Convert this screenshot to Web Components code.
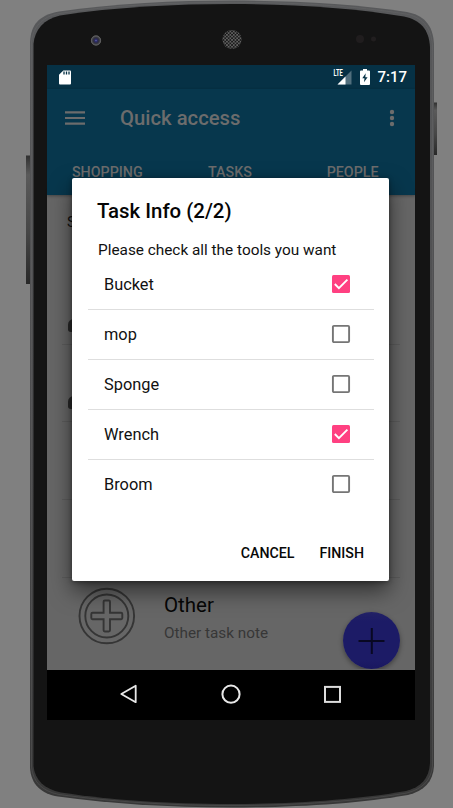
<!DOCTYPE html>
<html lang="en"><head><meta charset="utf-8"><title>Task Info</title>
<style>html,body{margin:0;width:453px;height:808px;overflow:hidden;background:#808080;font-family:Roboto,sans-serif}</style></head>
<body>
<phone-device>
 <status-bar time="7:17"></status-bar>
 <app-header heading="Quick access"><span>SHOPPING</span><span>TASKS</span><span>PEOPLE</span></app-header>
 <task-list><task-entry heading="Other" note="Other task note"></task-entry></task-list>
 <nav-bar></nav-bar>
 <add-button slot="overlay"></add-button>
 <tool-dialog slot="overlay" heading="Task Info (2/2)" message="Please check all the tools you want">
  <tool-row checked>Bucket</tool-row><tool-row>mop</tool-row><tool-row>Sponge</tool-row><tool-row checked>Wrench</tool-row><tool-row>Broom</tool-row>
  <span slot="action">CANCEL</span><span slot="action">FINISH</span>
 </tool-dialog>
</phone-device>
<script>
const define=(name,render)=>customElements.define(name,class extends HTMLElement{
  constructor(){super();this.attachShadow({mode:'open'});}
  connectedCallback(){this.shadowRoot.innerHTML=render(this);}
});

define('phone-device',()=>`<style>
:host{display:block;position:relative;isolation:isolate;width:453px;height:808px;box-sizing:border-box;padding:65px 38px 88px 47px;overflow:hidden}
.shell{position:absolute;inset:0;z-index:-1}
.screen{display:flex;flex-direction:column;width:368px;height:655px;overflow:hidden;background:#666}
</style>
<svg class="shell" width="453" height="808">
 <defs>
  <linearGradient id="rim" x1="0" y1="0" x2="0" y2="1"><stop offset="0" stop-color="#58595b"/><stop offset=".5" stop-color="#4c4c4e"/><stop offset="1" stop-color="#373737"/></linearGradient>
  <linearGradient id="key" x1="0" y1="0" x2="0" y2="1"><stop offset="0" stop-color="#303030"/><stop offset=".15" stop-color="#5a5a5a"/><stop offset=".6" stop-color="#464646"/><stop offset="1" stop-color="#282828"/></linearGradient>
  <pattern id="mesh" width="3.4" height="3.4" patternUnits="userSpaceOnUse"><circle cx=".85" cy=".85" r=".95" fill="#101010"/><circle cx="2.55" cy="2.55" r=".95" fill="#101010"/></pattern>
  <radialGradient id="lens"><stop offset="0" stop-color="#6b6bb0"/><stop offset=".25" stop-color="#292966"/><stop offset=".55" stop-color="#30303c"/><stop offset="1" stop-color="#555"/></radialGradient>
 </defs>
 <rect x="26" y="155.500" width="5" height="128.500" fill="url(#key)"/>
 <rect x="432.500" y="102.500" width="4.500" height="52.500" fill="url(#key)"/>
 <path d="M30 42C31 25 38 15.500 59 11.500C113 3.500 176 .5 232 .5C296 .5 357 4 407 12C423 15 433 24 434 44V766C433 782 424 791 408 795C360 803.500 296 807.500 232 807.500C166 807.500 110 803.500 58 796.500C41 794 31 784 30 768Z" fill="url(#rim)"/>
 <path d="M31.500 43C32.500 28 41 17 59 13.500C112 5 176 2.300 232 2.300C296 2.300 356 6 406 14C421 17 431 26 432.500 45V766C431 781 422 789 407 793C360 801 296 805.500 232 805.500C166 805.500 111 801.500 59 794.500C42 791 33 782 31.500 767Z" fill="none" stroke="#727274" stroke-opacity=".4" stroke-width=".7"/>
 <path d="M33.500 44C34.500 30 44 19 60 15.500C115 7 176 4 232 4C294 4 354 8 404 16.500C420 20 429 29 430 47V763C429 779 421 787 406 791C358 799.500 294 804 232 804C166 804 111 800 61 792.500C44 789 35 780 33.500 766Z" fill="#141414"/>
 <circle cx="96" cy="40.500" r="5" fill="url(#lens)"/><circle cx="96" cy="40.500" r="4.600" fill="none" stroke="#666" stroke-width=".8"/>
 <circle cx="232" cy="39.500" r="9.500" fill="#626262"/><circle cx="232" cy="39.500" r="9.500" fill="url(#mesh)"/>
 <circle cx="360" cy="39" r="4" fill="#201d1e"/><circle cx="373.500" cy="39" r="2.500" fill="#211e1f"/>
</svg>
<div class="screen"><slot></slot></div><slot name="overlay"></slot>`);

define('status-bar',e=>`<style>
:host{display:flex;height:24px;flex:none;box-sizing:border-box;padding:0 8px 0 12px;align-items:center;background:#063145;color:#fff;font:500 15px Roboto,sans-serif}
svg{display:block}.sp{flex:1}.bat{margin:0 7px 0 8px}
</style>
<svg width="12" height="15" viewBox="0 0 12 15"><path d="M4.300.5H11q1 0 1 1v12q0 1-1 1H1q-1 0-1-1V4.800Z" fill="#fff"/><path d="M5 1.500v3M7.500 1.500v3M10 1.500v3" stroke="#063145" stroke-width="1.300"/></svg>
<span class="sp"></span>
<svg width="19" height="19" viewBox="0 -2 19 19"><path d="M18.500.5v14H4.500Z" fill="#516f7d"/><path d="M12.500 6.500v8h-8Z" fill="#fff"/><path d="M0 0h10v7H0Z" fill="#063145"/><text x=".5" y="6.300" textLength="9.300" lengthAdjust="spacingAndGlyphs" font-family="Roboto" font-size="8.500" font-weight="700" fill="#fff">LTE</text></svg>
<svg class="bat" width="10" height="16" viewBox="0 0 10 16"><path d="M3 0h4v1.500h2q1 0 1 1V15q0 1-1 1H1q-1 0-1-1V2.500q0-1 1-1h2Z" fill="#fff"/><path d="M5.700 4.200 2.300 9.200h2.200L4 13.200l3.600-5H5.300Z" fill="#063145"/></svg>
<span>${e.getAttribute('time')}</span>`);

define('app-header',e=>`<style>
:host{display:block;height:106px;flex:none;background:#07374d;color:#6c6c6c;box-shadow:0 1px 3px #0005;position:relative}
.top{display:flex;height:57px;align-items:center;padding:0 20px 0 18px}
.title{font:500 20.300px Roboto,sans-serif;margin-left:35px;flex:1;padding-top:1px}
svg{display:block}
.tabs{display:flex;height:49px;align-items:center;margin-left:-1px;font:500 14.300px Roboto,sans-serif}
::slotted(span){width:122.67px;text-align:center;padding-top:3px}
</style><div class="top">
<svg width="20" height="14" viewBox="0 0 20 14"><path d="M0 1.300h20M0 7h20M0 12.700h20" stroke="#6c6c6c" stroke-width="2.200"/></svg>
<span class="title">${e.getAttribute('heading')}</span>
<svg width="6" height="18" viewBox="0 0 6 18"><g fill="#6c6c6c"><circle cx="3" cy="3" r="2.200"/><circle cx="3" cy="9" r="2.200"/><circle cx="3" cy="15" r="2.200"/></g></svg></div>
<div class="tabs"><slot></slot></div>`);

define('task-list',()=>`<style>
:host{display:flex;flex-direction:column;height:475px;flex:none;background:#666;color:#111}
.lead{height:72px;box-sizing:border-box;padding:18px 20px;font:15px Roboto,sans-serif}
.row{height:77.700px;box-sizing:border-box;margin:0 15px;border-bottom:1px solid #5c5c5c;display:flex;align-items:flex-end;padding:0 0 12px 6px;flex:none}
.dot{width:14px;height:13px;border-radius:6px 7px 7px 3px;background:#292929}
</style><div class="lead">S</div><div class="row"><span class="dot"></span></div><div class="row"><span class="dot"></span></div><div class="row"></div><div class="row"></div><slot></slot>`);

define('task-entry',e=>`<style>
:host{display:flex;padding:9px 0 0 31px;gap:28px}
svg{display:block;flex:none}
h3{margin:4px 0 0;font:400 20.500px/28px Roboto,sans-serif;color:#060606}
p{margin:3px 0 0;font:400 15.300px/22px Roboto,sans-serif;color:#373737}
</style><svg width="58" height="58" viewBox="0 0 58 58"><g transform="translate(-.2 0)" fill="none" stroke="#353535" stroke-width="1.900"><circle cx="29" cy="29" r="27.300"/><circle cx="29" cy="29" r="21.500"/><path d="M27 13.500h4q1.200 0 1.200 1.200v11.100h11.100q1.200 0 1.200 1.200v4q0 1.200-1.200 1.200H32.200v11.100q0 1.200-1.200 1.200h-4q-1.200 0-1.200-1.200V32.200H14.700q-1.200 0-1.200-1.200v-4q0-1.200 1.200-1.200h11.100V14.700q0-1.200 1.200-1.200Z"/></g></svg>
<div><h3>${e.getAttribute('heading')}</h3><p>${e.getAttribute('note')}</p></div>`);

define('nav-bar',()=>`<style>:host{display:flex;height:50px;flex:none;box-sizing:border-box;background:#000;align-items:center;padding:0 73px 0 72px;justify-content:space-between}svg{display:block}</style>
<svg width="20" height="22" viewBox="0 0 20 22"><path d="M16.700 1.800V18.200L2.300 10Z" fill="none" stroke="#e8e8e8" stroke-width="1.800" stroke-linejoin="round"/></svg>
<svg width="22" height="22" viewBox="0 0 22 22"><circle cx="11" cy="10.200" r="8.600" fill="none" stroke="#e8e8e8" stroke-width="2"/></svg>
<svg width="20" height="22" viewBox="0 0 20 22"><rect x="3" y="2.900" width="15" height="15" fill="none" stroke="#ddd" stroke-width="2"/></svg>`);

define('add-button',()=>`<style>:host{position:absolute;left:343px;top:612px;width:57px;height:57px;border-radius:50%;background:linear-gradient(#242366,#1c1b66 16%,#1c1b66 85%,#191760);box-shadow:0 2px 5px #0006;clip-path:inset(-8px -8px 0)}svg{display:block}</style>
<svg width="57" height="57"><path d="M15.500 29h26M28.800 16v26" stroke="#080822" stroke-width="2"/></svg>`);

define('tool-dialog',e=>`<style>
:host{position:absolute;left:72px;top:178px;width:317px;height:403px;border-radius:2px;background:#fff;color:#111;box-shadow:0 10px 22px #0008,0 1px 5px #0006;display:flex;flex-direction:column}
h2{margin:19px 25px 0;font:500 20.400px/28px Roboto,sans-serif;color:#050505}
p{margin:14px 26px 0;font:400 15.350px/22px Roboto,sans-serif;white-space:nowrap}
.rows{padding:0 15px 0 16px;margin-top:-1px}
.actions{display:flex;justify-content:flex-end;gap:25px;margin-top:auto;padding:0 25px 18px 0;font:500 14.200px/20px Roboto,sans-serif;color:#080808}
</style><h2>${e.getAttribute('heading')}</h2><p>${e.getAttribute('message')}</p><div class="rows"><slot></slot></div><div class="actions"><slot name="action"></slot></div>`);

define('tool-row',e=>`<style>
:host{display:flex;height:50px;box-sizing:border-box;padding:0 23px 0 16px;align-items:center;justify-content:space-between;border-bottom:1px solid #dedede;font:400 16.350px Roboto,sans-serif}
:host(:last-of-type){border-color:transparent}
svg{display:block;margin-top:-2px}</style><span><slot></slot></span>
<svg width="20" height="20" viewBox="0 0 20 20">${e.hasAttribute('checked')?'<rect x="1" y="1" width="18" height="18" rx="1.500" fill="#ff4081"/><path d="m3.800 10 4.100 4.200 8.500-8.500" fill="none" stroke="#fff" stroke-width="1.900"/>':'<rect x="1.900" y="1.900" width="16.200" height="16.200" rx="1" fill="none" stroke="#757575" stroke-width="1.900"/>'}</svg>`);
</script></body></html>
